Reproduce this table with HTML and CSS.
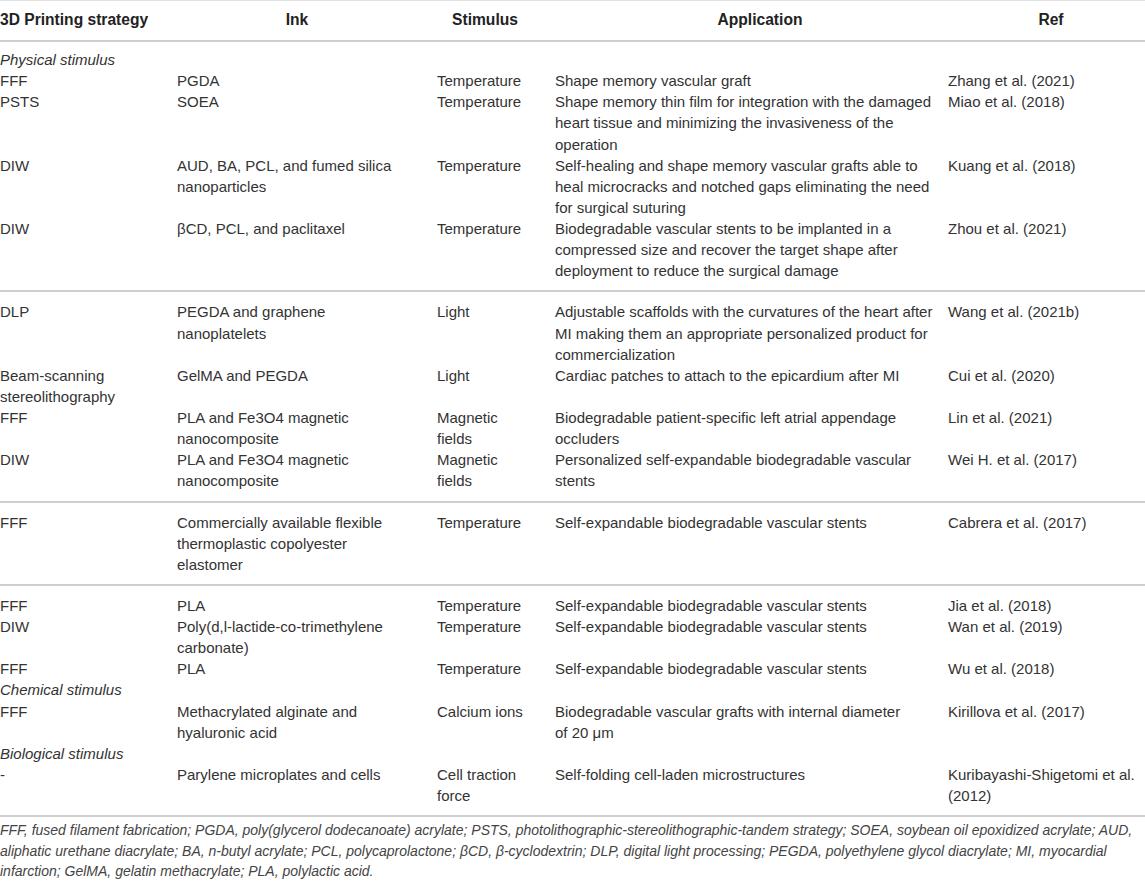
FILE: index.html
```html
<!DOCTYPE html>
<html lang="en">
<head>
<meta charset="utf-8">
<title>3D printing strategies</title>
<link rel="stylesheet" href="styles.css">
</head>
<body>
<div class="wrap">
<table class="tbl">
  <colgroup>
    <col class="c1"><col class="c2"><col class="c3"><col class="c4"><col class="c5">
  </colgroup>
  <thead>
    <tr>
      <th class="h1">3D Printing strategy</th>
      <th class="h2">Ink</th>
      <th class="h3">Stimulus</th>
      <th class="h4">Application</th>
      <th class="h5">Ref</th>
    </tr>
  </thead>
  <tbody class="grp">
    <tr class="cat"><td colspan="5">Physical stimulus</td></tr>
    <tr><td>FFF</td><td>PGDA</td><td>Temperature</td><td>Shape memory vascular graft</td><td>Zhang et al. (2021)</td></tr>
    <tr><td>PSTS</td><td>SOEA</td><td>Temperature</td><td>Shape memory thin film for integration with the damaged heart tissue and minimizing the invasiveness of the operation</td><td>Miao et al. (2018)</td></tr>
    <tr><td>DIW</td><td>AUD, BA, PCL, and fumed silica nanoparticles</td><td>Temperature</td><td>Self-healing and shape memory vascular grafts able to heal microcracks and notched gaps eliminating the need for surgical suturing</td><td>Kuang et al. (2018)</td></tr>
    <tr><td>DIW</td><td>βCD, PCL, and paclitaxel</td><td>Temperature</td><td>Biodegradable vascular stents to be implanted in a compressed size and recover the target shape after deployment to reduce the surgical damage</td><td>Zhou et al. (2021)</td></tr>
  </tbody>
  <tbody class="grp">
    <tr><td>DLP</td><td>PEGDA and graphene nanoplatelets</td><td>Light</td><td>Adjustable scaffolds with the curvatures of the heart after MI making them an appropriate personalized product for commercialization</td><td>Wang et al. (2021b)</td></tr>
    <tr><td>Beam-scanning stereolithography</td><td>GelMA and PEGDA</td><td>Light</td><td>Cardiac patches to attach to the epicardium after MI</td><td>Cui et al. (2020)</td></tr>
    <tr><td>FFF</td><td>PLA and Fe3O4 magnetic nanocomposite</td><td>Magnetic fields</td><td>Biodegradable patient-specific left atrial appendage occluders</td><td>Lin et al. (2021)</td></tr>
    <tr><td>DIW</td><td>PLA and Fe3O4 magnetic nanocomposite</td><td>Magnetic fields</td><td>Personalized self-expandable biodegradable vascular stents</td><td>Wei H. et al. (2017)</td></tr>
  </tbody>
  <tbody class="grp">
    <tr><td>FFF</td><td>Commercially available flexible thermoplastic copolyester elastomer</td><td>Temperature</td><td>Self-expandable biodegradable vascular stents</td><td>Cabrera et al. (2017)</td></tr>
  </tbody>
  <tbody class="grp">
    <tr><td>FFF</td><td>PLA</td><td>Temperature</td><td>Self-expandable biodegradable vascular stents</td><td>Jia et al. (2018)</td></tr>
    <tr><td>DIW</td><td>Poly(d,l-lactide-co-trimethylene carbonate)</td><td>Temperature</td><td>Self-expandable biodegradable vascular stents</td><td>Wan et al. (2019)</td></tr>
    <tr><td>FFF</td><td>PLA</td><td>Temperature</td><td>Self-expandable biodegradable vascular stents</td><td>Wu et al. (2018)</td></tr>
    <tr class="cat"><td colspan="5">Chemical stimulus</td></tr>
    <tr><td>FFF</td><td>Methacrylated alginate and hyaluronic acid</td><td>Calcium ions</td><td>Biodegradable vascular grafts with internal diameter<br>of 20 μm</td><td>Kirillova et al. (2017)</td></tr>
    <tr class="cat"><td colspan="5">Biological stimulus</td></tr>
    <tr><td>-</td><td>Parylene microplates and cells</td><td>Cell traction force</td><td>Self-folding cell-laden microstructures</td><td>Kuribayashi-Shigetomi et al. (2012)</td></tr>
  </tbody>
</table>
<p class="note">FFF, fused filament fabrication; PGDA, poly(glycerol dodecanoate) acrylate; PSTS, photolithographic-stereolithographic-tandem strategy; SOEA, soybean oil epoxidized acrylate; AUD,<br>aliphatic urethane diacrylate; BA, n-butyl acrylate; PCL, polycaprolactone; βCD, β-cyclodextrin; DLP, digital light processing; PEGDA, polyethylene glycol diacrylate; MI, myocardial<br>infarction; GelMA, gelatin methacrylate; PLA, polylactic acid.</p>
</div>
</body>
</html>
```

FILE: styles.css
```css
html, body {
  margin: 0;
  padding: 0;
  background: #ffffff;
}

body {
  font-family: "Liberation Sans", Arial, Helvetica, sans-serif;
  color: #333333;
}

.wrap {
  width: 1145px;
}

.tbl {
  width: 1145px;
  border-collapse: collapse;
  table-layout: fixed;
  font-size: 15px;
  line-height: 21.12px;
}

.c1 { width: 177px; }
.c2 { width: 260px; }
.c3 { width: 118px; }
.c4 { width: 393px; }
.c5 { width: 197px; }

.tbl thead tr {
  border-top: 1px solid #e2e2e2;
  border-bottom: 2px solid #cfcfcf;
}

.tbl th {
  font-size: 15.6px;
  font-weight: bold;
  color: #222222;
  padding: 8px 0 10px 0;
  line-height: 21px;
  text-align: center;
  vertical-align: middle;
}

.tbl th.h1 { text-align: left; }
.tbl th.h2 { padding-right: 20px; }
.tbl th.h3 { padding-right: 22px; }
.tbl th.h4 { padding-left: 17px; }
.tbl th.h5 { padding-left: 9px; }

.tbl td {
  padding: 0;
  vertical-align: top;
}

.tbl td:nth-child(1) { padding-right: 10px; }
.tbl td:nth-child(2) { padding-right: 38px; }
.tbl td:nth-child(3) { padding-right: 26px; }
.tbl td:nth-child(4) { padding-right: 8px; }
.tbl td:nth-child(5) { padding-right: 0; }

.tbl .cat td {
  font-style: italic;
  padding-right: 0;
}

.grp {
  border-bottom: 2px solid #cfcfcf;
}

.grp tr:first-child td {
  padding-top: 9px;
}

.grp tr:last-child td {
  padding-bottom: 9px;
}

thead + .grp tr:first-child td {
  padding-top: 7px;
}

.note {
  margin: 0;
  padding: 3px 0 0 0;
  font-size: 14px;
  line-height: 20.5px;
  font-style: italic;
  color: #444444;
  white-space: nowrap;
}
```
